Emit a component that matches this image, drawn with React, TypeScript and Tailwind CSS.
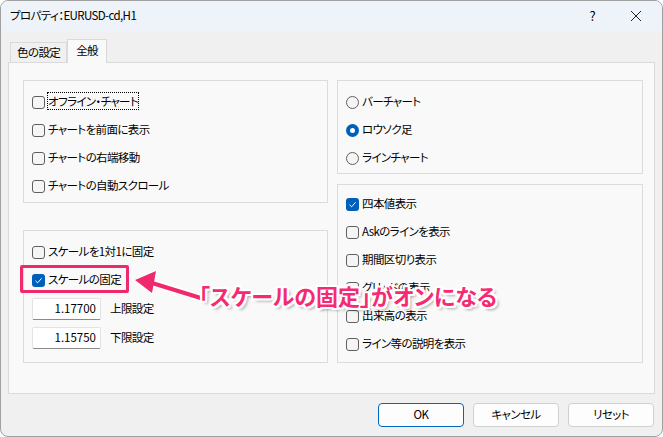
import React from "react";

const FONT = "font-['Noto_Sans_CJK_JP',sans-serif] [font-feature-settings:'palt']";

function Check({ checked = false }: { checked?: boolean }) {
  return checked ? (
    <span className="flex h-[13px] w-[13px] shrink-0 items-center justify-center rounded-[3px] bg-[#005fb8]">
      <svg width="9" height="9" viewBox="0 0 9 9">
        <path d="M1.5 4.8 L3.6 6.8 L7.6 2.3" fill="none" stroke="#fff" strokeWidth="1" />
      </svg>
    </span>
  ) : (
    <span className="h-[13px] w-[13px] shrink-0 rounded-[3px] border border-[#5f5f5f] bg-[#f5f5f5]" />
  );
}

function Radio({ checked = false }: { checked?: boolean }) {
  return checked ? (
    <span className="flex h-[13px] w-[13px] shrink-0 items-center justify-center rounded-full bg-[#005fb8]">
      <span className="h-[5px] w-[5px] rounded-full bg-white" />
    </span>
  ) : (
    <span className="h-[13px] w-[13px] shrink-0 rounded-full border border-[#5f5f5f] bg-[#f5f5f5]" />
  );
}

function Row({ children, box }: { children: React.ReactNode; box: React.ReactNode }) {
  return (
    <div className="flex h-[20px] items-center gap-[3px]">
      {box}
      <span className="whitespace-nowrap">{children}</span>
    </div>
  );
}

function NumInput({ value, label }: { value: string; label: string }) {
  return (
    <div className="flex items-center gap-[9px]">
      <div className="flex h-[22px] w-[69px] items-center justify-end rounded-[2px] border border-[#e3e3e3] border-b-[#8a8a8a] bg-white pr-[4px] tracking-[0px]">
        {value}
      </div>
      <span>{label}</span>
    </div>
  );
}

export default function App() {
  return (
    <div className={`relative h-[437px] w-[663px] overflow-hidden rounded-[8px] border border-[#a0a0a0] bg-[#f0f0f0] text-[11.5px] tracking-[-0.6px] text-black ${FONT}`}>
      {/* title bar */}
      <div className="flex h-[30px] items-center bg-[#eef3f9] pl-[9px] pr-[20px]">
        <span>プロパティ：EURUSD-cd,H1</span>
        <span className="ml-auto mr-[35px] text-[13px]">?</span>
        <svg width="12" height="12" viewBox="0 0 12 12">
          <path d="M1 1 L11 11 M11 1 L1 11" stroke="#222" strokeWidth="1" />
        </svg>
      </div>

      {/* tabs */}
      <div className="mt-[8px] flex h-[23px] items-end pl-[9px]">
        <div className="flex h-[20px] items-center border border-b-0 border-[#dadada] bg-[#f0f0f0] px-[6px]">色の設定</div>
        <div className="relative z-10 -mb-px flex h-[24px] items-center border border-b-0 border-[#dadada] bg-[#f9f9f9] px-[8px] pb-[2px]">全般</div>
      </div>

      {/* panel */}
      <div className="mx-[7px] flex h-[332px] gap-[9px] border border-[#dadada] bg-[#f9f9f9] pl-[14px] pt-[17px]">
        <div className="flex w-[305px] flex-col gap-[27px]">
          <div className="flex h-[123px] flex-col gap-[8px] border border-[#dcdcdc] pl-[8px] pt-[11px]">
            <Row box={<Check />}>
              <span className="outline-1 outline-dotted outline-black">オフライン・チャート</span>
            </Row>
            <Row box={<Check />}>チャートを前面に表示</Row>
            <Row box={<Check />}>チャートの右端移動</Row>
            <Row box={<Check />}>チャートの自動スクロール</Row>
          </div>
          <div className="flex h-[133px] flex-col border border-[#dcdcdc] pl-[8px] pt-[11px]">
            <Row box={<Check />}>スケールを1対1に固定</Row>
            <div className="mt-[8px]">
              <Row box={<Check checked />}>スケールの固定</Row>
            </div>
            <div className="mt-[8px]">
              <NumInput value="1.17700" label="上限設定" />
            </div>
            <div className="mt-[7px]">
              <NumInput value="1.15750" label="下限設定" />
            </div>
          </div>
        </div>
        <div className="flex w-[306px] flex-col gap-[10px]">
          <div className="flex h-[94px] flex-col gap-[8px] border border-[#dcdcdc] pl-[8px] pt-[11px]">
            <Row box={<Radio />}>バーチャート</Row>
            <Row box={<Radio checked />}>ロウソク足</Row>
            <Row box={<Radio />}>ラインチャート</Row>
          </div>
          <div className="flex h-[179px] flex-col gap-[8px] border border-[#dcdcdc] pl-[8px] pt-[9px]">
            <Row box={<Check checked />}>四本値表示</Row>
            <Row box={<Check />}>Askのラインを表示</Row>
            <Row box={<Check />}>期間区切り表示</Row>
            <Row box={<Check />}>グリッドの表示</Row>
            <Row box={<Check />}>出来高の表示</Row>
            <Row box={<Check />}>ライン等の説明を表示</Row>
          </div>
        </div>
      </div>

      {/* buttons */}
      <div className="mt-[9px] flex justify-end gap-[9px] pr-[8px]">
        <button className="flex h-[24px] w-[86px] items-center justify-center rounded-[4px] border border-[#0067c0] bg-[#fdfdfd]">OK</button>
        <button className="flex h-[24px] w-[86px] items-center justify-center rounded-[4px] border border-[#d0d0d0] bg-[#fdfdfd]">キャンセル</button>
        <button className="flex h-[24px] w-[86px] items-center justify-center rounded-[4px] border border-[#d0d0d0] bg-[#fdfdfd]">リセット</button>
      </div>

      {/* annotation overlay */}
      <div className="absolute left-[19px] top-[264px] h-[28px] w-[109px] rounded-[2px] border-[3px] border-[#f0286e]" />
      <svg className="absolute left-[125px] top-[262px]" width="90" height="50" viewBox="0 0 90 50">
        <path d="M78 36 L28 20" stroke="#fff" strokeWidth="7" strokeLinecap="round" />
        <path d="M9 17 L30 8 L26 30 Z" fill="#f0286e" stroke="#fff" strokeWidth="2" strokeLinejoin="round" />
        <path d="M78 36 L26 20" stroke="#f0286e" strokeWidth="4" strokeLinecap="round" />
        <path d="M9 17 L30 8 L26 30 Z" fill="#f0286e" />
      </svg>
      <div className="absolute left-[198px] top-[280px] whitespace-nowrap text-[22px] font-bold leading-[28px] tracking-[0px] text-[#f52a72] [text-shadow:2px_0_0_#fff,-2px_0_0_#fff,0_2px_0_#fff,0_-2px_0_#fff,2px_2px_0_#fff,-2px_-2px_0_#fff,2px_-2px_0_#fff,-2px_2px_0_#fff,3px_3px_3px_rgba(0,0,0,0.35)]">
        「スケールの固定」がオンになる
      </div>
    </div>
  );
}
